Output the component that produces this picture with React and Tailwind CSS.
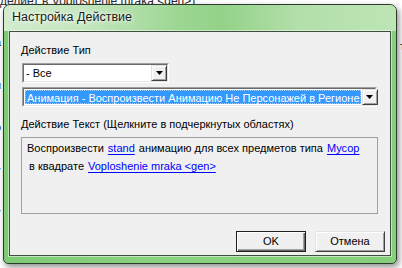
export default function App() {
  const font = "font-['Liberation_Sans',Arial,sans-serif]";
  const Arrow = () => (
    <div className="w-[16px] h-full shrink-0 bg-[#f0f0f0] border border-t-[#e3e3e3] border-l-[#e3e3e3] border-b-[#404040] border-r-[#404040] shadow-[inset_1px_1px_0_#ffffff,inset_-1px_-1px_0_#a0a0a0] flex items-center justify-center">
      <svg width="7" height="4" viewBox="0 0 7 4"><path d="M0 0H7L3.5 4Z" fill="#000" /></svg>
    </div>
  );
  return (
    <div className={`relative w-[402px] h-[268px] overflow-hidden bg-white ${font}`}>
      {/* background document text */}
      <div className="absolute top-[-8px] left-0 text-[12px] text-[#2a2a2a] whitespace-nowrap">делйет в Voploshenie mraka &lt;gen&gt;)</div>
      <div className="absolute left-[-5px] top-[34px] flex flex-col gap-[26px] text-[11px] text-[#2a2a2a]">
        <span>a</span><span>н</span><span>о</span><span>у</span><span>у</span>
      </div>
      <div className="absolute right-[-3px] top-[38px] text-[11px] text-[#2a2a2a]">т</div>

      {/* window */}
      <div className="absolute left-[3px] top-[4px] w-[394px] h-[260px] rounded-t-[7px] rounded-b-[5px] border border-[#2f3a2e] shadow-[2px_3px_6px_rgba(0,0,0,0.45)] bg-[linear-gradient(90deg,#7fcb74_0%,#8ad27f_40%,#86cf7b_100%)] overflow-hidden flex flex-col px-[5px] pb-[7px]">
        <div className="-mx-[5px] h-[26px] shrink-0 flex items-center pl-[8px] pb-[1px] text-[12.5px] text-[#1a1a1a] [text-shadow:0_0_6px_#ffffff,0_0_3px_#ffffff] bg-[linear-gradient(90deg,#d2ebcd_0%,#c4e6be_20%,#9cd692_45%,#93d288_55%,#b2dfaa_75%,#bde5b5_100%)]">
          Настройка Действие
        </div>
        <div className="relative flex-1 border border-[#3f4f3e] bg-[#f0f0f0] shadow-[0_0_0_1px_rgba(255,255,255,0.5)] flex flex-col pl-[11px] pt-[11px] text-[11px] text-black">
          <div className="h-[14px] leading-[14px]">Действие Тип</div>

          <div className="mt-[6px] ml-[1px] w-[147px] h-[20px] border border-t-[#a0a0a0] border-l-[#a0a0a0] border-b-white border-r-white">
            <div className="w-full h-full border border-t-[#696969] border-l-[#696969] border-b-[#e3e3e3] border-r-[#e3e3e3] bg-white flex">
              <div className="flex-1 pl-[2px] leading-[16px]">- Все</div>
              <Arrow />
            </div>
          </div>

          <div className="mt-[4px] ml-[1px] w-[355px] h-[20px] border border-t-[#a0a0a0] border-l-[#a0a0a0] border-b-white border-r-white">
            <div className="w-full h-full border border-t-[#696969] border-l-[#696969] border-b-[#e3e3e3] border-r-[#e3e3e3] bg-white flex">
              <div className="flex-1 p-[1px]">
                <div className="h-full bg-[#3399ff] border border-dotted border-[#ffffff80] text-white pl-[1px] leading-[14px] whitespace-nowrap">Анимация - Воспроизвести Анимацию Не Персонажей в Регионе</div>
              </div>
              <Arrow />
            </div>
          </div>

          <div className="mt-[10px] h-[14px] leading-[14px]">Действие Текст (Щелкните в подчеркнутых областях)</div>

          <div className="mt-[6px] w-[357px] h-[77px] border border-[#a0a0a0] pt-[1px] pl-[5px] leading-[18px] whitespace-nowrap">
            <div>
              Воспроизвести<span className="mx-[4px] text-[#0000ff] underline underline-offset-2">stand</span>анимацию для всех предметов типа<span className="mx-[4px] text-[#0000ff] underline underline-offset-2">Мусор</span>
            </div>
            <div className="pl-[2px]">
              в квадрате<span className="mx-[4px] text-[#0000ff] underline underline-offset-2">Voploshenie mraka &lt;gen&gt;</span>
            </div>
          </div>

          <div className="mt-[17px] flex justify-end gap-[9px] pr-[5px]">
            <div className="w-[70px] h-[21px] border border-[#1e1e1e] bg-[#f0f0f0] shadow-[inset_1px_1px_0_#ffffff,inset_-1px_-1px_0_#696969,inset_-2px_-2px_0_#a0a0a0] flex items-center justify-center">OK</div>
            <div className="w-[70px] h-[21px] border border-t-[#e3e3e3] border-l-[#e3e3e3] border-b-[#404040] border-r-[#404040] bg-[#f0f0f0] shadow-[inset_1px_1px_0_#ffffff,inset_-1px_-1px_0_#a0a0a0] flex items-center justify-center">Отмена</div>
          </div>
        </div>
      </div>
    </div>
  );
}
